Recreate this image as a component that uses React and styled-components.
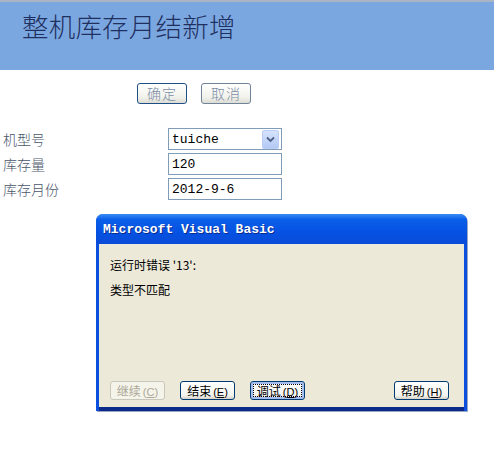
import React from 'react';
import styled, { createGlobalStyle } from 'styled-components';

const GlobalStyle = createGlobalStyle`
	html, body {
		margin: 0;
		padding: 0;
		background: #fff;
	}
	body {
		width: 494px;
		height: 473px;
		overflow: hidden;
		position: relative;
		font-family: "Noto Sans CJK SC", "Noto Sans", sans-serif;
	}
`;

const Page = styled.div`
	position: relative;
	width: 494px;
	height: 473px;
	border-top: 2px solid #a9b4c4;
	box-sizing: border-box;
`;

const Header = styled.div`
	height: 68px;
	background: #7ba7e1;
	padding: 8px 0 0 22px;
	box-sizing: border-box;
`;

const Title = styled.h1`
	margin: 0;
	font-size: 26.5px;
	font-weight: 300;
	line-height: 32px;
	color: #1f2f5e;
	letter-spacing: 0.2px;
`;

const ActionBar = styled.div`
	display: flex;
	gap: 14px;
	padding-left: 137px;
	margin-top: 13px;
`;

const PageButton = styled.button`
	width: 50px;
	height: 21px;
	padding: 0;
	border: 1px solid ${ ( p ) => ( p.$primary ? '#1e4f86' : '#6f8399' ) };
	border-radius: 3px;
	background: linear-gradient( #ffffff, #f2f2ec 70%, #dcdcd4 );
	color: #7c8da6;
	font-family: "Noto Sans CJK SC", sans-serif;
	font-weight: 300;
	font-size: 14px;
	line-height: 19px;
	letter-spacing: 1px;
`;

const Form = styled.div`
	display: grid;
	grid-template-columns: 165px 114px;
	grid-auto-rows: 22px;
	row-gap: 3px;
	padding-left: 3px;
	margin-top: 24px;
`;

const Label = styled.div`
	font-size: 14px;
	font-weight: 300;
	line-height: 22px;
	color: #4a566b;
`;

const Field = styled.div`
	display: flex;
	align-items: center;
	height: 22px;
	border: 1px solid #7f9db9;
	box-sizing: border-box;
	padding: 0 2px 0 3px;
	font-family: "Liberation Mono", "DejaVu Sans Mono", monospace;
	font-size: 13px;
	color: #000;
	background: #fff;
`;

const FieldText = styled.span`
	flex: 1;
`;

const DropButton = styled.span`
	width: 15px;
	height: 17px;
	border: 1px solid #b9cdf5;
	border-radius: 2px;
	background: linear-gradient( #d6e3fc, #b3c9f5 );
	display: flex;
	align-items: center;
	justify-content: center;
`;

const Dialog = styled.div`
	position: absolute;
	left: 96px;
	top: 212px;
	width: 371px;
	height: 197px;
	display: flex;
	flex-direction: column;
	border-radius: 7px 7px 0 0;
	background: #0a4fdd;
	box-shadow: 1px 1px 0 #9aa6c4;
`;

const TitleBar = styled.div`
	height: 30px;
	border-radius: 7px 7px 0 0;
	background: linear-gradient( #3a8cf5 0%, #0a5fe9 18%, #0552e2 60%, #0a4bd8 100% );
	display: flex;
	align-items: center;
	padding-left: 7px;
	font-family: "Liberation Mono", "DejaVu Sans Mono", monospace;
	font-weight: 700;
	font-size: 13px;
	color: #fff;
	text-shadow: 1px 1px 0 #0a2a8c;
`;

const DialogBody = styled.div`
	flex: 1;
	display: flex;
	flex-direction: column;
	margin: 0 3px 0 3px;
	border-bottom: 4px solid #0b2a8a;
	background: #ece9d8;
	padding: 13px 15px 7px 11px;
	font-size: 12px;
	color: #000;
`;

const Message = styled.div`
	line-height: 16px;
	margin-bottom: 9px;
`;

const ButtonRow = styled.div`
	margin-top: auto;
	display: flex;
	gap: 15px;

	& > :last-child {
		margin-left: auto;
	}
`;

const DialogButton = styled.button`
	width: 55px;
	height: 19px;
	padding: 0;
	border: 1px solid ${ ( p ) => ( p.disabled ? '#c9c7ba' : '#003c74' ) };
	border-radius: 3px;
	background: ${ ( p ) =>
		p.disabled ? '#f5f4ea' : 'linear-gradient(#ffffff, #f3f3ee 80%, #d6d0c5)' };
	color: ${ ( p ) => ( p.disabled ? '#aca899' : '#000' ) };
	font-family: "Noto Sans CJK SC", sans-serif;
	font-size: 12px;
	line-height: 17px;
	box-shadow: ${ ( p ) => ( p.$focused ? 'inset 0 0 0 2px #a6bdf0' : 'none' ) };
	outline: ${ ( p ) => ( p.$focused ? '1px dotted #000' : 'none' ) };
	outline-offset: -4px;
`;

const Key = styled.span`
	margin-left: 2px;
	font-family: "Liberation Sans", sans-serif;
	font-size: 11px;

	u {
		text-decoration: underline;
	}
`;

const Chevron = () => (
	<svg width="9" height="7" viewBox="0 0 9 7">
		<path d="M1 1.5 L4.5 5 L8 1.5" fill="none" stroke="#4d6185" strokeWidth="1.8" />
	</svg>
);

export default function App() {
	return (
		<Page>
			<GlobalStyle />
			<Header>
				<Title>整机库存月结新增</Title>
			</Header>

			<ActionBar>
				<PageButton $primary>确定</PageButton>
				<PageButton>取消</PageButton>
			</ActionBar>

			<Form>
				<Label>机型号</Label>
				<Field>
					<FieldText>tuiche</FieldText>
					<DropButton>
						<Chevron />
					</DropButton>
				</Field>
				<Label>库存量</Label>
				<Field>
					<FieldText>120</FieldText>
				</Field>
				<Label>库存月份</Label>
				<Field>
					<FieldText>2012-9-6</FieldText>
				</Field>
			</Form>

			<Dialog>
				<TitleBar>Microsoft Visual Basic</TitleBar>
				<DialogBody>
					<Message>运行时错误 '13':</Message>
					<Message>类型不匹配</Message>
					<ButtonRow>
						<DialogButton disabled>
							继续<Key>(<u>C</u>)</Key>
						</DialogButton>
						<DialogButton>
							结束<Key>(<u>E</u>)</Key>
						</DialogButton>
						<DialogButton $focused>
							调试<Key>(<u>D</u>)</Key>
						</DialogButton>
						<DialogButton>
							帮助<Key>(<u>H</u>)</Key>
						</DialogButton>
					</ButtonRow>
				</DialogBody>
			</Dialog>
		</Page>
	);
}
